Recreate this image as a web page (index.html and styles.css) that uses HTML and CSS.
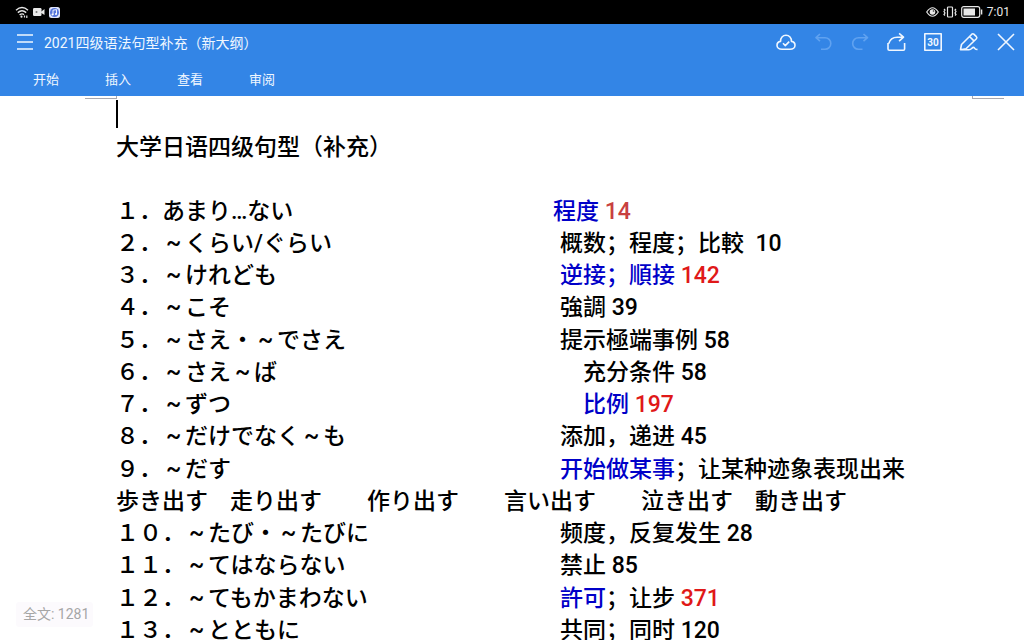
FILE: index.html
```
<!DOCTYPE html>
<html lang="zh-CN">
<head>
<meta charset="utf-8">
<meta name="viewport" content="width=device-width, initial-scale=1">
<title>2021四级语法句型补充（新大纲）</title>
<link rel="stylesheet" href="styles.css">
</head>
<body>
<div class="status">
  <div class="status-left">
    <svg width="14" height="13" viewBox="0 0 14 13" fill="none" stroke="#e8e8e8" stroke-width="1.4"><path d="M1 4.2Q7 -1 13 4.2M2.8 6.6Q7 3 11.200 6.600M4.600 8.900Q7 7 9 8.600"/><circle cx="6.500" cy="10.700" r="1.100" fill="#e8e8e8" stroke="none"/><path d="M9.500 11.500V9.500M11.800 9.500v2.500" stroke-width="1.200"/></svg>
    <svg width="12" height="10" viewBox="0 0 12 10" fill="#e8e8e8"><rect x="0" y="1" width="8.500" height="8" rx="1.200"/><path d="M8 4.800 11.500 2v6L8 5.800z"/><circle cx="3.500" cy="5" r="1" fill="#777"/></svg>
    <svg width="11" height="11" viewBox="0 0 11 11"><rect width="11" height="11" rx="2.500" fill="#dfe4fa"/><circle cx="5.500" cy="5.500" r="4.500" fill="#5575dc"/><path d="M4 8V3.200L7.500 2.600V7" fill="none" stroke="#fff" stroke-width=".9"/><circle cx="3.500" cy="7.500" r="1" fill="#fff"/><circle cx="7" cy="7" r="1" fill="#fff"/></svg>
  </div>
  <div class="status-right">
    <svg width="13" height="12" viewBox="0 0 13 12" fill="none" stroke="#e8e8e8" stroke-width="1.200"><path d="M.7 6Q6.500-2.500 12.300 6Q6.500 14.500 .7 6z"/><circle cx="6.500" cy="6" r="2.800" fill="#e8e8e8" stroke="none"/><circle cx="7.500" cy="5" r=".8" fill="#333" stroke="none"/></svg>
    <svg width="14" height="12" viewBox="0 0 14 12" fill="none" stroke="#e8e8e8" stroke-width="1.200"><rect x="4.500" y="1" width="5" height="10" rx=".8"/><path d="M1 3l1 1-1 1.500L2 7 1 8.500l1 1M13 3l-1 1 1 1.500L12 7l1 1.500-1 1"/></svg>
    <svg width="22" height="12" viewBox="0 0 22 12"><rect x=".7" y=".7" width="18" height="10.600" rx="2" fill="none" stroke="#e8e8e8" stroke-width="1.200"/><rect x="2.500" y="2.500" width="11.500" height="7" fill="#e8e8e8"/><path d="M20.600 3.500v5" stroke="#e8e8e8" stroke-width="1.400"/></svg>
    <span>7:01</span>
  </div>
</div>
<header class="bar">
  <div class="bar-top">
    <button class="icon menu" aria-label="菜单"><svg width="16" height="16" viewBox="0 0 16 16"><path d="M0 1h16M0 8h16M0 15h16"/></svg></button>
    <h1 class="name">2021四级语法句型补充（新大纲）</h1>
    <div class="tools">
      <button class="icon" aria-label="云同步"><svg width="24" height="24" viewBox="0 0 24 24"><path d="M8 19.300C5 19.300 3 17.500 3 15.300C3 13.300 4.300 11.700 6.600 11.400C6.300 7.800 8.800 5.300 12 5.300S17.700 7.800 17.400 11.400C19.700 11.700 21 13.300 21 15.300C21 17.500 19 19.300 16 19.300z"/><path d="M9 13.300l2.300 2.300 3.900-4"/></svg></button>
      <button class="icon" aria-label="撤销" disabled><svg width="24" height="24" viewBox="0 0 24 24"><path d="M9 4 5 7.700l4 3.500M5 7.700h9a5.800 5.800 0 0 1 0 11.600H10"/></svg></button>
      <button class="icon" aria-label="重做" disabled><svg width="24" height="24" viewBox="0 0 24 24"><path d="M16.500 4l4 3.700-4 3.500M20 7.700h-8.500a5.800 5.800 0 0 0 0 11.600h4"/></svg></button>
      <button class="icon" aria-label="分享"><svg width="24" height="24" viewBox="0 0 24 24"><path d="M4 13v6q0 1.300 1.300 1.300h14q1.300 0 1.300-1.300v-6M4.800 13.500C5.800 9.500 9.300 7.200 13.300 7.200H19.300M15.100 3.300 19.500 7.200l-4.400 4"/></svg></button>
      <button class="icon" aria-label="第30页"><svg width="24" height="24" viewBox="0 0 24 24"><path d="M3.800 3.800h16.400v16.400H3.800z"/><text class="page-no" x="12" y="15.500">30</text></svg></button>
      <button class="icon" aria-label="编辑"><svg width="24" height="24" viewBox="0 0 24 24"><path d="M3.500 19.700 4.500 14.500 14.800 4.200q1-.9 2 0l2.600 2.500q.9 1 0 2L9 18.800zM12.500 6.500l4.700 4.600M3.500 19.700H12C15 19.700 15 16.700 17 17.500C18 18 17.200 19.700 20.500 19.400"/></svg></button>
      <button class="icon" aria-label="关闭"><svg width="24" height="24" viewBox="0 0 24 24"><path d="M4 4l16 16M20 4 4 20"/></svg></button>
    </div>
  </div>
  <nav class="tabs">
    <button class="tab">开始</button>
    <button class="tab">插入</button>
    <button class="tab">查看</button>
    <button class="tab">审阅</button>
  </nav>
</header>
<main class="doc">
  <div class="crops"><i class="crop crop-left"></i><i class="crop crop-right"></i></div>
  <div class="text">
    <div class="caret-line"><span class="caret"></span></div>
    <h2 class="heading">大学日语四级句型（补充）</h2>
    <ul class="list">
      <li class="row"><span>１．あまり…ない</span><span class="early"><b class="blue">程度</b> <b class="rust">14</b></span></li>
      <li class="row"><span>２．<i class="t">~</i>くらい/ぐらい</span><span>概数；程度；比較&nbsp; 10</span></li>
      <li class="row"><span>３．<i class="t">~</i>けれども</span><span><b class="blue">逆接；順接</b> <b class="red">142</b></span></li>
      <li class="row"><span>４．<i class="t">~</i>こそ</span><span>強調 39</span></li>
      <li class="row"><span>５．<i class="t">~</i>さえ・<i class="t">~</i>でさえ</span><span>提示極端事例 58</span></li>
      <li class="row"><span>６．<i class="t">~</i>さえ<i class="t">~</i>ば</span><span class="late">充分条件 58</span></li>
      <li class="row"><span>７．<i class="t">~</i>ずつ</span><span class="late"><b class="blue">比例</b> <b class="red">197</b></span></li>
      <li class="row"><span>８．<i class="t">~</i>だけでなく<i class="t">~</i>も</span><span>添加，递进 45</span></li>
      <li class="row"><span>９．<i class="t">~</i>だす</span><span><b class="blue">开始做某事</b>；让某种迹象表现出来</span></li>
      <li class="words"><span>歩き出す</span><span class="near">走り出す</span><span>作り出す</span><span>言い出す</span><span>泣き出す</span><span class="near">動き出す</span></li>
      <li class="row"><span>１０．<i class="t">~</i>たび・<i class="t">~</i>たびに</span><span>频度，反复发生 28</span></li>
      <li class="row"><span>１１．<i class="t">~</i>てはならない</span><span>禁止 85</span></li>
      <li class="row"><span>１２．<i class="t">~</i>てもかまわない</span><span><b class="blue">許可</b>；让步 <b class="red">371</b></span></li>
      <li class="row"><span>１３．<i class="t">~</i>とともに</span><span>共同；同时 120</span></li>
    </ul>
  </div>
  <div class="count">全文: 1281</div>
</main>
</body>
</html>
```
FILE: styles.css
```
* { box-sizing: border-box; }

body {
  margin: 0;
  height: 100vh;
  display: flex;
  flex-direction: column;
  overflow: hidden;
  background: #fff;
  color: #000;
  font-family: Roboto, "Noto Sans CJK SC", sans-serif;
  text-spacing-trim: space-all;
}

button {
  border: 0;
  padding: 0;
  background: none;
  color: inherit;
  font: inherit;
}

svg { display: block; }

.status {
  height: 24px;
  flex: none;
  display: flex;
  align-items: center;
  justify-content: space-between;
  padding: 0 14px 0 15px;
  background: #000;
  color: #e8e8e8;
  font-size: 12px;
}

.status-left,
.status-right {
  display: flex;
  align-items: center;
  gap: 4px;
}

.bar {
  flex: none;
  height: 72px;
  background: #3385e6;
  color: #f0f7ff;
}

.bar-top {
  display: flex;
  align-items: center;
  height: 36px;
  padding: 0 6px 0 17px;
}

.icon {
  display: flex;
  align-items: center;
  justify-content: center;
  height: 24px;
}

.icon path {
  fill: none;
  stroke: #f0f7ff;
  stroke-width: 1.6;
  stroke-linejoin: round;
}

.icon:disabled path { stroke: #60a2f0; }

.name {
  flex: 1;
  margin: 0 0 0 11px;
  font-size: 14px;
  font-weight: 400;
}

.tools {
  width: 244px;
  display: flex;
  justify-content: space-between;
}

.tools .icon { width: 24px; }

.page-no {
  fill: #f0f7ff;
  font-size: 10px;
  font-weight: 700;
  text-anchor: middle;
}

.tabs {
  display: flex;
  padding-left: 10px;
}

.tab {
  width: 72px;
  height: 36px;
  font-size: 13px;
}

.doc {
  flex: 1;
  min-height: 0;
  position: relative;
  overflow: hidden;
}

.crops {
  display: flex;
  justify-content: space-between;
  height: 3px;
  padding: 0 20px 0 85px;
}

.crop {
  width: 32px;
  border-bottom: 1px solid #a8a8b0;
}

.crop-left { border-right: 1px solid #a8a8b0; }
.crop-right { border-left: 1px solid #a8a8b0; }

.text {
  padding: 1px 0 0 116px;
  font-size: 23px;
  font-weight: 500;
  line-height: 32px;
  white-space: nowrap;
}

.caret-line { height: 32px; }

.caret {
  display: block;
  width: 2px;
  height: 28px;
  background: #000;
}

.heading {
  margin: 0;
  font-size: 23px;
  font-weight: 500;
}

.list {
  margin: 32px 0 0;
  padding: 0;
  list-style: none;
}

.list li { height: 32px; }
.list li:nth-child(4n) { margin-bottom: 1px; }

.row {
  display: grid;
  grid-template-columns: 444px 1fr;
}

.row b { font-weight: inherit; }

.early { margin-left: -7px; }
.late { margin-left: 23px; }

.blue { color: #0000c8; }
.red { color: #e01818; }
.rust { color: #c84040; }

.t {
  display: inline-block;
  width: 23px;
  text-align: center;
  font-style: normal;
}

.words {
  display: flex;
  gap: 45px;
}

.words .near { margin-left: -23px; }

.count {
  position: absolute;
  left: 16px;
  bottom: 13px;
  padding: 0 4px 0 7px;
  border-radius: 3px;
  background: #fcfafd;
  color: #a6a6a6;
  font-size: 14px;
  line-height: 25px;
}
```
